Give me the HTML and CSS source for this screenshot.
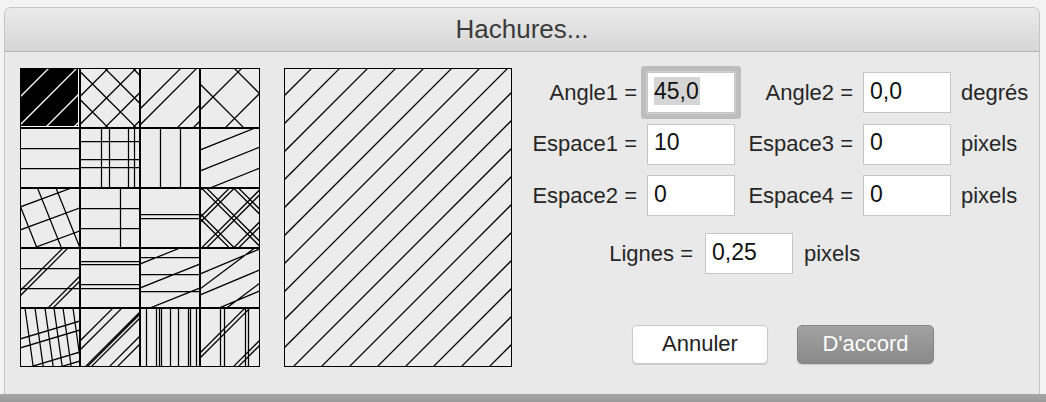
FILE: index.html
```html
<!DOCTYPE html>
<html lang="fr">
<head>
<meta charset="utf-8">
<title>Hachures</title>
<link rel="stylesheet" href="styles.css">
</head>
<body>
<div class="window">
  <div class="titlebar">Hachures...</div>
  <div class="content">
    <svg class="patterns" width="240" height="299" viewBox="0 0 240 299">
      <defs><clipPath id="cc"><rect x="0" y="0" width="60" height="60"/></clipPath></defs>
      <rect class="cellbg" x="0" y="0" width="240" height="299"/>
      <g transform="translate(0,0)" clip-path="url(#cc)">
        <rect x="0" y="0" width="59" height="59" fill="#fff"/>
        <rect x="0" y="0" width="58" height="58" fill="#000"/>
        <path class="hw" d="M39,-10 L-41,70 M67,-10 L-13,70 M95,-10 L15,70 M123,-10 L43,70"/>
      </g>
      <g transform="translate(60,0)" clip-path="url(#cc)">
        <path class="h" d="M10.5,-10 L-69.5,70 M38.5,-10 L-41.5,70 M66.5,-10 L-13.5,70 M94.5,-10 L14.5,70 M122.5,-10 L42.5,70 M-69.5,-10 L10.5,70 M-41.5,-10 L38.5,70 M-13.5,-10 L66.5,70 M14.5,-10 L94.5,70 M42.5,-10 L122.5,70"/>
      </g>
      <g transform="translate(120,0)" clip-path="url(#cc)">
        <path class="h" d="M51,-10 L-29,70 M67,-10 L-13,70 M107,-10 L27,70 M123,-10 L43,70"/>
      </g>
      <g transform="translate(180,0)" clip-path="url(#cc)">
        <path class="h" d="M52,-10 L-28,70 M95,-10 L15,70 M-26,-10 L54,70 M24,-10 L104,70"/>
      </g>

      <g transform="translate(0,60)" clip-path="url(#cc)">
        <path class="h" d="M0,20.5 H60 M0,40.5 H60"/>
      </g>
      <g transform="translate(60,60)" clip-path="url(#cc)">
        <path class="h" d="M21.5,0 V60 M29.5,0 V60 M48.5,0 V60 M54.5,0 V60 M0,13.5 H60 M0,31.5 H60 M0,39.5 H60"/>
      </g>
      <g transform="translate(120,60)" clip-path="url(#cc)">
        <path class="h" d="M20.5,0 V60 M40.5,0 V60"/>
      </g>
      <g transform="translate(180,60)" clip-path="url(#cc)">
        <path class="h" d="M-5,24 L65,-4 M-5,45 L65,17 M-5,66 L65,38"/>
      </g>

      <g transform="translate(0,120)" clip-path="url(#cc)">
        <path class="h" d="M-5,20.85 L65,-5.05 M-5,43.85 L65,17.95 M-5,66.85 L65,40.95 M-9,-5 L19,65 M15.5,-5 L43.5,65 M34,-5 L62,65"/>
      </g>
      <g transform="translate(60,120)" clip-path="url(#cc)">
        <path class="h" d="M0,20.5 H60 M0,40.5 H60 M40.5,0 V60"/>
      </g>
      <g transform="translate(120,120)" clip-path="url(#cc)">
        <path class="h" d="M0,26.5 H60 M0,30.5 H60"/>
      </g>
      <g transform="translate(180,120)" clip-path="url(#cc)">
        <path class="h" d="M12.5,-10 L-67.5,70 M39.5,-10 L-40.5,70 M44.5,-10 L-35.5,70 M71.5,-10 L-8.5,70 M76.5,-10 L-3.5,70 M103.5,-10 L23.5,70 M108.5,-10 L28.5,70 M-40.5,-10 L39.5,70 M-35.5,-10 L44.5,70 M-8.5,-10 L71.5,70 M-3.5,-10 L76.5,70 M23.5,-10 L103.5,70 M28.5,-10 L108.5,70"/>
      </g>

      <g transform="translate(0,180)" clip-path="url(#cc)">
        <path class="h" d="M0,20.5 H60 M0,40.5 H60 M53,-10 L-27,70 M58,-10 L-22,70 M98,-10 L18,70 M103,-10 L23,70"/>
      </g>
      <g transform="translate(60,180)" clip-path="url(#cc)">
        <path class="h" d="M0,13.5 H60 M0,16.5 H60 M0,36.5 H60 M0,40.5 H60"/>
      </g>
      <g transform="translate(120,180)" clip-path="url(#cc)">
        <path class="h" d="M0,9.5 H60 M0,26.5 H60 M0,43.5 H60 M-5,18 L65,-10 M-5,42 L65,14 M-5,66 L65,38"/>
      </g>
      <g transform="translate(180,180)" clip-path="url(#cc)">
        <path class="h" d="M-5,28.1 L65,-1.3 M-5,49.1 L65,19.7 M-5,70.1 L65,40.7 M-5,44.75 L65,-7.75 M-5,83.75 L65,31.25"/>
      </g>

      <g transform="translate(0,240)" clip-path="url(#cc)">
        <path class="h" d="M4.3,-5 L14.1,65 M14.3,-5 L24.1,65 M24.3,-5 L34.1,65 M33.3,-5 L43.1,65 M42.3,-5 L52.1,65 M52.3,-5 L62.1,65 M-5,32.5 L65,11.5 M-5,41.5 L65,20.5 M-5,63.5 L65,42.5 M-5,72.5 L65,51.5"/>
      </g>
      <g transform="translate(60,240)" clip-path="url(#cc)">
        <path class="h" d="M43,-10 L-37,70 M52,-10 L-28,70 M74,-10 L-6,70 M76,-10 L-4,70 M80,-10 L0,70 M98,-10 L18,70 M106,-10 L26,70"/>
      </g>
      <g transform="translate(120,240)" clip-path="url(#cc)">
        <path class="h" d="M6.5,0 V60 M16.5,0 V60 M19.5,0 V60 M21.5,0 V60 M30.5,0 V60 M38.5,0 V60 M48.5,0 V60 M50.5,0 V60 M56.5,0 V60"/>
      </g>
      <g transform="translate(180,240)" clip-path="url(#cc)">
        <path class="h" d="M20.5,0 V60 M24.5,0 V60 M45.5,0 V60 M48.5,0 V60 M55,-10 L-25,70 M60,-10 L-20,70 M102,-10 L22,70 M107,-10 L27,70"/>
      </g>

      <path class="gridline" d="M60,0 V299 M120,0 V299 M180,0 V299 M0,60 H240 M0,120 H240 M0,180 H240 M0,240 H240"/>
      <rect class="frame" x="0.5" y="0.5" width="239" height="298"/>
    </svg>

    <svg class="preview" width="228" height="299" viewBox="0 0 228 299">
      <rect class="cellbg" x="0" y="0" width="228" height="299"/>
      <path class="h" d="M38,-10 L-282,310 M66,-10 L-254,310 M94,-10 L-226,310 M122,-10 L-198,310 M150,-10 L-170,310 M178,-10 L-142,310 M206,-10 L-114,310 M234,-10 L-86,310 M262,-10 L-58,310 M290,-10 L-30,310 M318,-10 L-2,310 M346,-10 L26,310 M374,-10 L54,310 M402,-10 L82,310 M430,-10 L110,310 M458,-10 L138,310 M486,-10 L166,310 M514,-10 L194,310 M542,-10 L222,310"/>
      <rect class="frame" x="0.5" y="0.5" width="227" height="298"/>
    </svg>

    <div class="form">
      <div class="fields">
        <span class="label">Angle1 =</span>
        <div class="field focused"><span class="sel">45,0</span></div>
        <span class="label">Angle2 =</span>
        <div class="field">0,0</div>
        <span class="unit">degrés</span>

        <span class="label">Espace1 =</span>
        <div class="field">10</div>
        <span class="label">Espace3 =</span>
        <div class="field">0</div>
        <span class="unit">pixels</span>

        <span class="label">Espace2 =</span>
        <div class="field">0</div>
        <span class="label">Espace4 =</span>
        <div class="field">0</div>
        <span class="unit">pixels</span>
      </div>
      <div class="lines-row">
        <span class="label lignes">Lignes =</span>
        <div class="field">0,25</div>
        <span class="unit">pixels</span>
      </div>
      <div class="buttons">
        <button class="btn">Annuler</button>
        <button class="btn primary">D'accord</button>
      </div>
    </div>
  </div>
</div>
</body>
</html>
```

FILE: styles.css
```css
html, body {
  margin: 0;
  padding: 0;
}
body {
  width: 1046px;
  height: 402px;
  overflow: hidden;
  background: linear-gradient(#f3f3f3 0, #f3f3f3 394px, #a6a6a6 394px, #9a9a9a 402px);
  font-family: "Liberation Sans", Arial, sans-serif;
}
.window {
  margin: 7px 0 0 4px;
  width: 1036px;
  height: 387px;
  box-sizing: border-box;
  border: 1px solid #c5c5c5;
  border-bottom: none;
  border-radius: 7px 7px 0 0;
  background: #e9e9e9;
  overflow: hidden;
}
.titlebar {
  height: 43px;
  border-bottom: 1px solid #b4b4b4;
  background: linear-gradient(#ebebeb, #d6d6d6);
  display: flex;
  align-items: center;
  justify-content: center;
  font-size: 26px;
  color: #3b3b3b;
}
.content {
  display: flex;
  align-items: flex-start;
  padding: 16px 0 0 15px;
}
.patterns, .preview {
  display: block;
  flex: none;
}
.preview {
  margin-left: 24px;
}
.cellbg {
  fill: #ececec;
}
.h {
  fill: none;
  stroke: #000;
  stroke-width: 1.25;
}
.hw {
  fill: none;
  stroke: #fff;
  stroke-width: 1.3;
}
.gridline {
  fill: none;
  stroke: #000;
  stroke-width: 2;
}
.frame {
  fill: none;
  stroke: #000;
  stroke-width: 1;
}
.form {
  margin-left: 18px;
  margin-top: 4px;
}
.fields {
  display: grid;
  grid-template-columns: 107px 88px 108px 88px auto;
  column-gap: 10px;
  row-gap: 10.5px;
  align-items: center;
}
.label {
  text-align: right;
  font-size: 22px;
  color: #262626;
  white-space: nowrap;
}
.unit {
  font-size: 22px;
  color: #262626;
  white-space: nowrap;
}
.field {
  height: 41px;
  width: 88px;
  box-sizing: border-box;
  border: 1px solid #c6c6c6;
  background: #fff;
  font-size: 23px;
  color: #111;
  padding: 0 0 3px 6px;
  display: flex;
  align-items: center;
}
.field.focused {
  border-radius: 1px;
  box-shadow: 0 0 0 1px #d0d0d0, 0 0 0 6px #bdbdbd;
}
.sel {
  background: #d5d5d5;
  line-height: 28px;
  padding-right: 1px;
}
.lines-row {
  display: flex;
  align-items: center;
  margin-top: 17px;
}
.lines-row .lignes {
  width: 163px;
  margin-right: 12px;
}
.lines-row .unit {
  margin-left: 11px;
}
.buttons {
  display: flex;
  gap: 29px;
  margin-top: 51px;
  padding-left: 102px;
}
.btn {
  width: 136px;
  height: 39px;
  box-sizing: border-box;
  font-family: "Liberation Sans", Arial, sans-serif;
  font-size: 22px;
  border-radius: 5px;
  border: 1px solid #c8c8c8;
  background: #fff;
  color: #222;
  box-shadow: 0 1px 1px rgba(0, 0, 0, 0.12);
  padding: 0 0 2px;
}
.btn.primary {
  width: 137px;
  border-color: #858585;
  background: linear-gradient(#a2a2a2, #898989);
  color: #fff;
}
```
